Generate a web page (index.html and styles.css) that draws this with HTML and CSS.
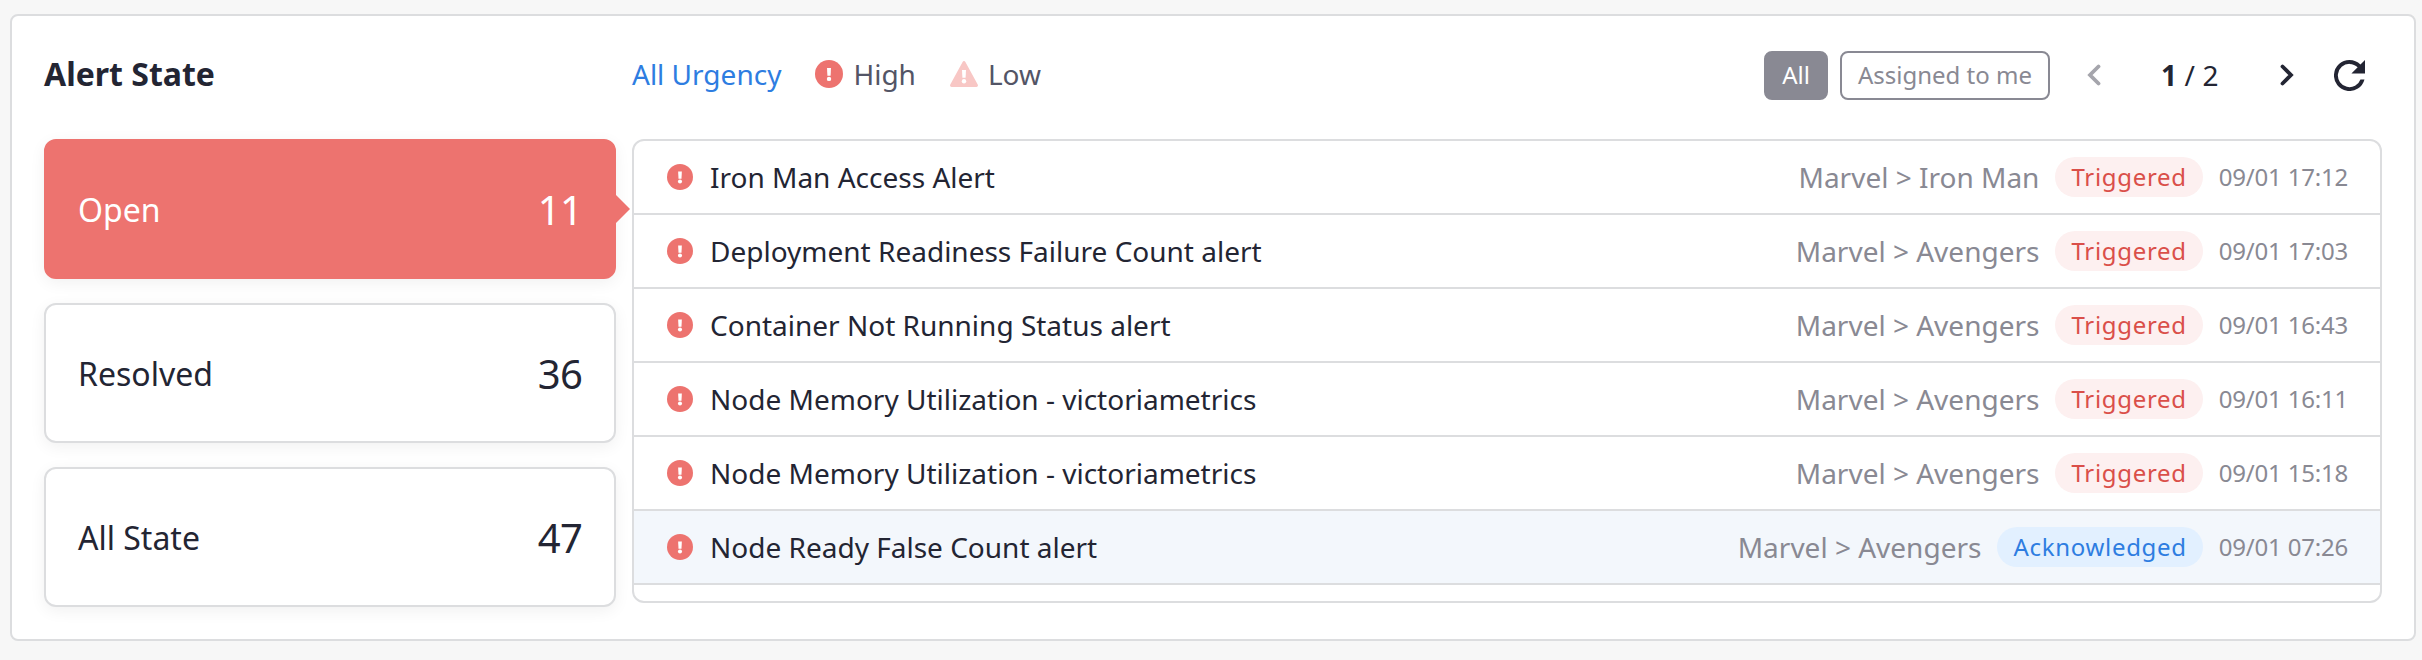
FILE: index.html
```html
<!DOCTYPE html>
<html lang="en">
<head>
<meta charset="utf-8">
<title>Alert State</title>
<link rel="stylesheet" href="styles.css">
</head>
<body>
<svg class="sprite" aria-hidden="true">
  <symbol id="high" viewBox="0 0 28 28"><circle cx="14" cy="14" r="14" fill="#ed736f"/><path d="M12 8h4l-.4 7.800h-3.200z" fill="#fff"/><circle cx="14" cy="18.900" r="2.200" fill="#fff"/></symbol>
  <symbol id="low" viewBox="0 0 28 26"><path d="M12.6 .9a1.6 1.6 0 0 1 2.8 0l12.3 22.7a1.6 1.6 0 0 1-1.4 2.4H1.7a1.6 1.6 0 0 1-1.4-2.4z" fill="#f8c7c5"/><path d="M12 9h4l-.4 7.800h-3.200z" fill="#fff"/><circle cx="14" cy="20.200" r="2.200" fill="#fff"/></symbol>
</svg>
<section class="panel">
  <header class="head">
    <h2 class="title">Alert State</h2>
    <nav class="urgency">
      <a class="all-urgency">All Urgency</a>
      <span class="level"><svg class="icon-high"><use href="#high"/></svg>High</span>
      <span class="level"><svg class="icon-low"><use href="#low"/></svg>Low</span>
    </nav>
    <div class="tools">
      <button class="btn btn-on">All</button>
      <button class="btn btn-me">Assigned to me</button>
      <svg class="chev prev" viewBox="0 0 14 22"><path d="M11.500 2.500 3 11l8.500 8.500"/></svg>
      <span class="page"><b>1</b> / 2</span>
      <svg class="chev next" viewBox="0 0 14 22"><path d="M2.500 2.500 11 11l-8.500 8.500"/></svg>
      <svg class="refresh" viewBox="4 4 16 16"><path d="M17.650 6.350A7.958 7.958 0 0 0 12 4a8 8 0 1 0 7.730 10h-2.080A6 6 0 1 1 12 6c1.660 0 3.140.69 4.220 1.780L13 11h7V4z"/></svg>
    </div>
  </header>
  <div class="body">
    <div class="states">
      <div class="state state-open"><span>Open</span><span class="count">11</span></div>
      <div class="state"><span>Resolved</span><span class="count">36</span></div>
      <div class="state"><span>All State</span><span class="count">47</span></div>
    </div>
    <div class="list">
      <div class="row"><svg class="icon-row"><use href="#high"/></svg><span class="name">Iron Man Access Alert</span><span class="project">Marvel &gt; Iron Man</span><span class="badge">Triggered</span><time>09/01 17:12</time></div>
      <div class="row"><svg class="icon-row"><use href="#high"/></svg><span class="name">Deployment Readiness Failure Count alert</span><span class="project">Marvel &gt; Avengers</span><span class="badge">Triggered</span><time>09/01 17:03</time></div>
      <div class="row"><svg class="icon-row"><use href="#high"/></svg><span class="name">Container Not Running Status alert</span><span class="project">Marvel &gt; Avengers</span><span class="badge">Triggered</span><time>09/01 16:43</time></div>
      <div class="row"><svg class="icon-row"><use href="#high"/></svg><span class="name">Node Memory Utilization - victoriametrics</span><span class="project">Marvel &gt; Avengers</span><span class="badge">Triggered</span><time>09/01 16:11</time></div>
      <div class="row"><svg class="icon-row"><use href="#high"/></svg><span class="name">Node Memory Utilization - victoriametrics</span><span class="project">Marvel &gt; Avengers</span><span class="badge">Triggered</span><time>09/01 15:18</time></div>
      <div class="row row-ack"><svg class="icon-row"><use href="#high"/></svg><span class="name">Node Ready False Count alert</span><span class="project">Marvel &gt; Avengers</span><span class="badge badge-ack">Acknowledged</span><time>09/01 07:26</time></div>
    </div>
  </div>
</section>
</body>
</html>
```
FILE: styles.css
```css
* { box-sizing: border-box; }
body { margin: 0; height: 660px; padding: 14px 6px 19px 10px; background: #f7f7f7; color: #232533; font-family: "Noto Sans", sans-serif; }
.sprite { position: absolute; width: 0; height: 0; }
.panel { height: 627px; padding: 0 32px; border: 2px solid #dcdddf; border-radius: 8px; background: #fff; }
.head { display: flex; align-items: center; height: 123px; padding-bottom: 5px; }
.title { width: 588px; margin: 0; padding-bottom: 2px; font-size: 32px; line-height: 44px; font-weight: 700; }
.urgency { display: flex; align-items: center; padding-bottom: 2px; font-size: 28px; line-height: 38px; color: #535566; }
.all-urgency { color: #2e7de1; margin-right: 34px; }
.level { display: flex; align-items: center; gap: 10px; margin-right: 34px; }
.icon-high { width: 28px; height: 28px; }
.icon-low { width: 28px; height: 26px; }
.tools { display: flex; align-items: center; margin-left: auto; padding-right: 17px; }
.btn { height: 49px; padding: 0 0 2px; border: 2px solid #898993; border-radius: 8px; background: #fff; color: #898993; font: 24px/33px "Noto Sans", sans-serif; }
.btn-on { width: 64px; margin-right: 12px; background: #898993; color: #fff; }
.btn-me { width: 210px; }
.chev { width: 14px; height: 22px; fill: none; stroke: #232533; stroke-width: 3.800px; stroke-linecap: round; }
.prev { margin: 0 60px 0 37px; stroke: #a5a5ac; }
.next { margin: 0 40px 0 60px; }
.page { width: 59px; white-space: nowrap; font-size: 28px; line-height: 38px; letter-spacing: .1px; }
.refresh { width: 31px; height: 31px; fill: #232533; }
.body { display: flex; gap: 16px; }
.states { display: flex; flex-direction: column; gap: 24px; width: 572px; }
.state { position: relative; display: flex; align-items: center; justify-content: space-between; height: 140px; padding: 2px 32px 0; border: 2px solid #dcdddf; border-radius: 12px; background: #fff; box-shadow: 0 4px 16px rgba(0, 0, 0, .06); font-size: 32px; line-height: 44px; }
.count { font-size: 40px; line-height: 54px; font-weight: 450; letter-spacing: -.8px; }
.state-open { border-color: #ed736f; background: #ed736f; color: #fff; }
.state-open::after { content: ""; position: absolute; left: 570px; top: 54px; border: 14px solid transparent; border-left-color: #ed736f; border-right-width: 0; }
.list { flex: 1; height: 464px; border: 2px solid #dcdddf; border-radius: 12px; overflow: hidden; }
.row { display: flex; align-items: center; height: 74px; padding: 0 32px 0 33px; border-bottom: 2px solid #dcdddf; font-size: 28px; line-height: 38px; }
.row-ack { background: #f3f7fc; }
.icon-row { width: 26px; height: 26px; margin-right: 17px; }
.project { margin-left: auto; color: #898993; }
.badge { height: 40px; margin: 0 16px; padding: 0 16px; border-radius: 20px; background: #fdf0f0; color: #da4f49; font-size: 24px; line-height: 39px; letter-spacing: .7px; }
.badge-ack { background: #e2f0ff; color: #2e7de1; }
time { padding-bottom: 2px; color: #898993; font-size: 24px; line-height: 33px; letter-spacing: -.2px; }
```
